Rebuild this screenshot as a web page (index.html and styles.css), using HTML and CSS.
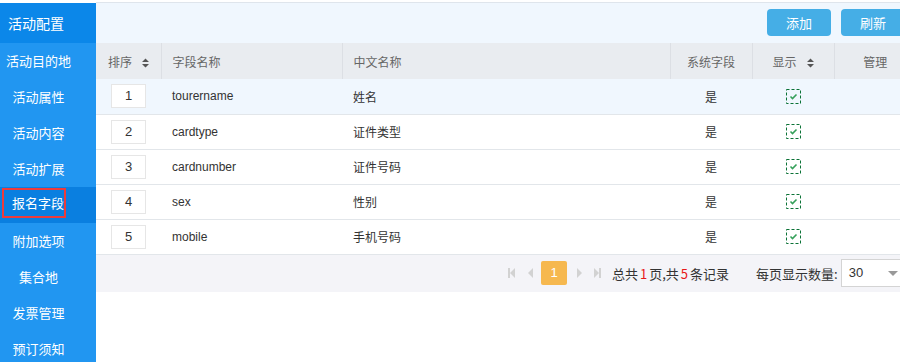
FILE: index.html
```html
<!DOCTYPE html>
<html lang="zh-CN">
<head>
<meta charset="utf-8">
<title>活动配置</title>
<link rel="stylesheet" href="styles.css">
</head>
<body>
<div class="page">
  <aside class="sidebar">
    <div class="side-title">活动配置</div>
    <ul class="side-menu">
      <li class="side-item">活动目的地</li>
      <li class="side-item">活动属性</li>
      <li class="side-item">活动内容</li>
      <li class="side-item">活动扩展</li>
      <li class="side-item active"><span class="mark">报名字段</span></li>
      <li class="side-item">附加选项</li>
      <li class="side-item">集合地</li>
      <li class="side-item">发票管理</li>
      <li class="side-item">预订须知</li>
    </ul>
  </aside>
  <main class="main">
    <div class="toolbar">
      <button class="btn">添加</button>
      <button class="btn">刷新</button>
    </div>
    <table class="grid">
      <colgroup>
        <col class="c-sort"><col class="c-field"><col class="c-cn"><col class="c-sys"><col class="c-show"><col class="c-manage">
      </colgroup>
      <thead>
        <tr>
          <th class="left first">排序<svg class="sort-ic" viewBox="0 0 7 10" width="7" height="10"><path d="M3.5 0.5L7 4H0Z M0 6H7L3.5 9.5Z" fill="#555"/></svg></th>
          <th class="left">字段名称</th>
          <th class="left">中文名称</th>
          <th>系统字段</th>
          <th>显示<svg class="sort-ic" viewBox="0 0 7 10" width="7" height="10"><path d="M3.5 0.5L7 4H0Z M0 6H7L3.5 9.5Z" fill="#555"/></svg></th>
          <th>管理</th>
        </tr>
      </thead>
      <tbody>
        <tr class="hl">
          <td class="first"><span class="num">1</span></td>
          <td>tourername</td><td>姓名</td><td class="center">是</td>
          <td class="center"><svg class="chk" viewBox="0 0 15 15" width="15" height="15"><rect x="0.5" y="0.5" width="14" height="14" fill="none" stroke="#0b7236" stroke-dasharray="3 2"/><polyline points="4.5,7.5 6.5,9.5 10.5,5.5" fill="none" stroke="#35a05a" stroke-width="1.6"/></svg></td><td></td>
        </tr>
        <tr>
          <td class="first"><span class="num">2</span></td>
          <td>cardtype</td><td>证件类型</td><td class="center">是</td>
          <td class="center"><svg class="chk" viewBox="0 0 15 15" width="15" height="15"><rect x="0.5" y="0.5" width="14" height="14" fill="none" stroke="#0b7236" stroke-dasharray="3 2"/><polyline points="4.5,7.5 6.5,9.5 10.5,5.5" fill="none" stroke="#35a05a" stroke-width="1.6"/></svg></td><td></td>
        </tr>
        <tr>
          <td class="first"><span class="num">3</span></td>
          <td>cardnumber</td><td>证件号码</td><td class="center">是</td>
          <td class="center"><svg class="chk" viewBox="0 0 15 15" width="15" height="15"><rect x="0.5" y="0.5" width="14" height="14" fill="none" stroke="#0b7236" stroke-dasharray="3 2"/><polyline points="4.5,7.5 6.5,9.5 10.5,5.5" fill="none" stroke="#35a05a" stroke-width="1.6"/></svg></td><td></td>
        </tr>
        <tr>
          <td class="first"><span class="num">4</span></td>
          <td>sex</td><td>性别</td><td class="center">是</td>
          <td class="center"><svg class="chk" viewBox="0 0 15 15" width="15" height="15"><rect x="0.5" y="0.5" width="14" height="14" fill="none" stroke="#0b7236" stroke-dasharray="3 2"/><polyline points="4.5,7.5 6.5,9.5 10.5,5.5" fill="none" stroke="#35a05a" stroke-width="1.6"/></svg></td><td></td>
        </tr>
        <tr>
          <td class="first"><span class="num">5</span></td>
          <td>mobile</td><td>手机号码</td><td class="center">是</td>
          <td class="center"><svg class="chk" viewBox="0 0 15 15" width="15" height="15"><rect x="0.5" y="0.5" width="14" height="14" fill="none" stroke="#0b7236" stroke-dasharray="3 2"/><polyline points="4.5,7.5 6.5,9.5 10.5,5.5" fill="none" stroke="#35a05a" stroke-width="1.6"/></svg></td><td></td>
        </tr>
      </tbody>
    </table>
    <div class="pager">
      <span class="pg-ic first-ic"></span>
      <span class="pg-ic prev-ic"></span>
      <span class="pg-cur">1</span>
      <span class="pg-ic next-ic"></span>
      <span class="pg-ic last-ic"></span>
      <span class="pg-info">总共<em>1</em>页,共<em>5</em>条记录</span>
      <span class="pg-size">每页显示数量:</span>
      <span class="pg-select">30<span class="caret"></span></span>
    </div>
  </main>
</div>
</body>
</html>
```
FILE: styles.css
```css
* { box-sizing: border-box; }
html, body { margin: 0; padding: 0; background: #fff; overflow: hidden; }
body {
  font-family: "Liberation Sans", "Noto Sans CJK SC", sans-serif;
  font-size: 12px;
  color: #333;
}
.page {
  display: flex;
  align-items: flex-start;
  padding-top: 2px;
  width: 920px;
  height: 362px;
  overflow: hidden;
}
.sidebar {
  width: 96px;
  flex: none;
  margin-top: 1px;
  background: #2196f1;
  color: #fff;
  height: 400px;
}
.side-title {
  height: 40px;
  line-height: 40px;
  background: #0b87e9;
  font-size: 14px;
  padding-left: 8px;
  font-family: "Noto Sans CJK SC", sans-serif;
}
.side-menu { list-style: none; margin: 0; padding: 0; }
.side-item {
  height: 36px;
  line-height: 36px;
  width: 96px;
  font-size: 13px;
  font-family: "Noto Sans CJK SC", sans-serif;
  padding-right: 19px;
  text-align: center;
}
.side-item.active {
  background: #0a7fe0;
  text-align: left;
  padding-top: 1px;
}
.mark {
  display: block;
  width: 64px;
  height: 30px;
  line-height: 26px;
  margin-left: 2px;
  padding-left: 8px;
  border: 2px solid #ee3b3b;
}
.main {
  width: 820px;
  flex: none;
  border-top: 1px solid #dfe5ec;
}
.toolbar {
  height: 40px;
  background: #f0f7fe;
  display: flex;
  justify-content: flex-end;
  align-items: flex-start;
  gap: 10px;
  padding: 6px 11px 0 0;
}
.btn {
  width: 64px;
  height: 27px;
  border: none;
  border-radius: 4px;
  background: #45aee6;
  color: #fff;
  font-family: "Noto Sans CJK SC", sans-serif;
  font-size: 13px;
  padding: 0;
}
.grid {
  width: 820px;
  table-layout: fixed;
  border-collapse: collapse;
}
.c-sort { width: 65px; }
.c-field { width: 181px; }
.c-cn { width: 328px; }
.c-sys { width: 82px; }
.c-show { width: 82px; }
.c-manage { width: 82px; }
.grid th {
  height: 36px;
  background: #e9ecf0;
  color: #666;
  font-weight: normal;
  font-family: "Noto Sans CJK SC", sans-serif;
  font-size: 12px;
  text-align: center;
  border-left: 1px solid #dcdfe4;
  padding: 0;
}
.grid th.left { text-align: left; padding-left: 11px; }
.grid th.first { border-left: none; padding-left: 12px; }
.sort-ic {
  display: inline-block;
  margin-left: 10px;
  vertical-align: -1px;
}
.grid td {
  height: 35px;
  padding: 0 0 0 11px;
  border-bottom: 1px solid #e2e6ea;
  background: #fff;
  white-space: nowrap;
}
.grid tr.hl td { background: #f0f7fe; }
.grid td.first { padding-left: 15px; }
.grid td.center { text-align: center; padding-left: 0; }
.num {
  display: block;
  width: 35px;
  height: 24px;
  line-height: 22px;
  border: 1px solid #e6e6e6;
  background: #fff;
  text-align: center;
  font-size: 13px;
  color: #333;
}
.chk {
  display: inline-block;
  vertical-align: middle;
}
.pager {
  height: 37px;
  background: #f4f4f8;
  display: flex;
  align-items: center;
  padding-left: 412px;
  white-space: nowrap;
}
.pg-ic {
  display: inline-block;
  width: 7px;
  height: 10px;
  position: relative;
}
.first-ic { margin-right: 11px; }
.prev-ic { margin-right: 8px; }
.next-ic { margin-left: 10px; margin-right: 10px; }
.last-ic { margin-right: 11px; }
.first-ic::before, .last-ic::before {
  content: "";
  position: absolute;
  top: 0;
  width: 2px;
  height: 10px;
  background: #d2d2d2;
}
.first-ic::before { left: 0; }
.last-ic::before { right: 0; }
.first-ic::after, .prev-ic::after {
  content: "";
  position: absolute;
  top: 0;
  right: 0;
  border-style: solid;
  border-width: 5px 5px 5px 0;
  border-color: transparent #d2d2d2 transparent transparent;
}
.next-ic::after, .last-ic::after {
  content: "";
  position: absolute;
  top: 0;
  left: 0;
  border-style: solid;
  border-width: 5px 0 5px 5px;
  border-color: transparent transparent transparent #d2d2d2;
}
.pg-cur {
  width: 26px;
  height: 24px;
  line-height: 24px;
  text-align: center;
  background: #f6b84f;
  color: #fff;
  border-radius: 2px;
  font-size: 13px;
}
.pg-info {
  font-family: "Noto Sans CJK SC", sans-serif;
  font-size: 13px;
  color: #333;
}
.pg-info em { font-style: normal; color: #e81818; margin: 0 2px; }
.pg-size {
  font-family: "Noto Sans CJK SC", sans-serif;
  font-size: 13px;
  color: #333;
  margin-left: 27px;
}
.pg-select {
  display: block;
  position: relative;
  width: 70px;
  height: 28px;
  line-height: 26px;
  margin-left: 3px;
  padding-left: 7px;
  border: 1px solid #d4d4d4;
  background: #fff;
  font-size: 13px;
  color: #333;
}
.caret {
  position: absolute;
  left: 46px;
  top: 11px;
  border-style: solid;
  border-width: 5px 5px 0 5px;
  border-color: #999 transparent transparent transparent;
}
```
